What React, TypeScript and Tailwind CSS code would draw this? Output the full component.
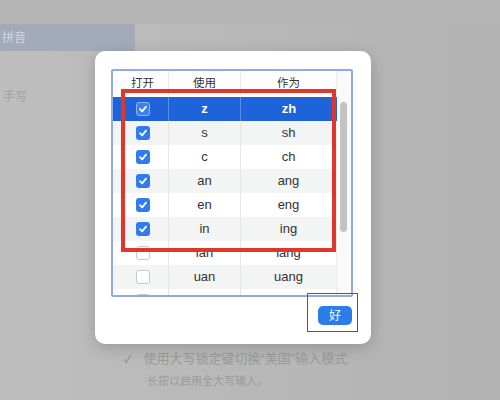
import React from 'react';

const rows: { use: string; as: string; on: boolean }[] = [
  { use: 'z', as: 'zh', on: true },
  { use: 's', as: 'sh', on: true },
  { use: 'c', as: 'ch', on: true },
  { use: 'an', as: 'ang', on: true },
  { use: 'en', as: 'eng', on: true },
  { use: 'in', as: 'ing', on: true },
  { use: 'ian', as: 'iang', on: false },
  { use: 'uan', as: 'uang', on: false },
  { use: 'f', as: 'h', on: false },
];

const Check = ({ on, selected }: { on: boolean; selected: boolean }) => {
  if (!on) {
    return <div className="w-[14px] h-[14px] rounded-[3px] border border-[#c9c9c9] bg-white" />;
  }
  return (
    <div
      className={`w-[14px] h-[14px] rounded-[3px] flex items-center justify-center ${
        selected ? 'bg-[#3b82f0] border border-[#8fb6f5]' : 'bg-[#2f7cf0]'
      }`}
    >
      <svg width="10" height="10" viewBox="0 0 10 10" fill="none">
        <path d="M2 5.2 L4.2 7.4 L8 2.6" stroke="white" strokeWidth="1.8" strokeLinecap="round" strokeLinejoin="round" />
      </svg>
    </div>
  );
};

export default function App() {
  return (
    <div className="w-[500px] h-[400px] relative overflow-hidden bg-gradient-to-r from-[#bebebe] to-[#b2b2b2] font-['Liberation_Sans','Noto_Sans_CJK_SC',sans-serif]">
      {/* background window */}
      <div className="flex flex-col h-full">
        <div className="h-[24px] bg-[#b5b5b5]" />
        <div className="flex h-[323px]">
          <div className="w-[135px] flex flex-col">
            <div className="h-[27px] bg-[#a3aaba] flex items-center pl-[2px] text-[12px] text-[#d2d6df]">拼音</div>
            <div className="h-[55px] flex items-end pl-[3px] text-[12px] text-[#a3a3a3]">手写</div>
          </div>
          <div className="flex-1" />
        </div>
        <div className="pl-[124px] flex flex-col text-[#9a9a9a]">
          <div className="flex items-center gap-[12px] h-[24px] text-[13px]">
            <span className="text-[11px] text-[#8c8c8c]">✓</span>
            <span>使用大写锁定键切换“美国”输入模式</span>
          </div>
          <div className="pl-[23px] text-[11px] leading-[20px]">长按以启用全大写输入。</div>
        </div>
      </div>

      {/* dialog */}
      <div className="absolute left-[95px] top-[51px] w-[276px] h-[293px] bg-white rounded-[10px] shadow-[0_4px_16px_rgba(0,0,0,0.18)] pt-[18px] pl-[16px] pr-[18px]">
        <div className="w-[242px] h-[228px] border-2 border-[#8fa9ea] rounded-[2px] overflow-hidden flex">
          <div className="flex-1 flex flex-col">
            <div className="h-[26px] flex text-[11.5px] text-[#333] shrink-0">
              <div className="w-[56px] flex items-center justify-center pl-[4px] border-r border-[#ececec]">打开</div>
              <div className="w-[72px] flex items-center justify-center border-r border-[#ececec]">使用</div>
              <div className="flex-1 flex items-center justify-center border-r border-[#ececec]">作为</div>
            </div>
            {rows.map((r, i) => {
              const selected = i === 0;
              const bg = selected ? 'bg-[#1f63da]' : i % 2 === 1 ? 'bg-[#f3f4f4]' : 'bg-white';
              const line = selected ? 'border-[#5f8fe6]' : 'border-[#e6e6e6]';
              const text = selected ? 'text-white font-bold' : 'text-[#333]';
              return (
                <div key={r.use} className={`h-[24px] shrink-0 flex text-[13px] ${bg} ${text}`}>
                  <div className={`w-[56px] flex items-center justify-center pl-[4px] border-r ${line}`}>
                    <Check on={r.on} selected={selected} />
                  </div>
                  <div className={`w-[72px] flex items-center justify-center border-r ${line}`}>{r.use}</div>
                  <div className={`flex-1 flex items-center justify-center ${selected ? '' : 'border-r border-[#ececec]'}`}>{r.as}</div>
                </div>
              );
            })}
          </div>
          <div className="w-[14px] shrink-0 bg-[#fafafa] pt-[31px] pl-[3px]">
            <div className="w-[7px] h-[130px] rounded-full bg-[#c3c3c3]" />
          </div>
        </div>
        <div className="flex justify-end mt-[9px] pr-[1px]">
          <button className="w-[34px] h-[19px] rounded-[5px] bg-[#2b7de9] text-white text-[12px] leading-none flex items-center justify-center">好</button>
        </div>

        {/* annotations */}
        <div className="absolute left-[26px] top-[38px] w-[215px] h-[163px] border-4 border-[#e0362b]" />
        <div className="absolute left-[212px] top-[242px] w-[51px] h-[39px] border border-[#c0283c]" />
      </div>
    </div>
  );
}
